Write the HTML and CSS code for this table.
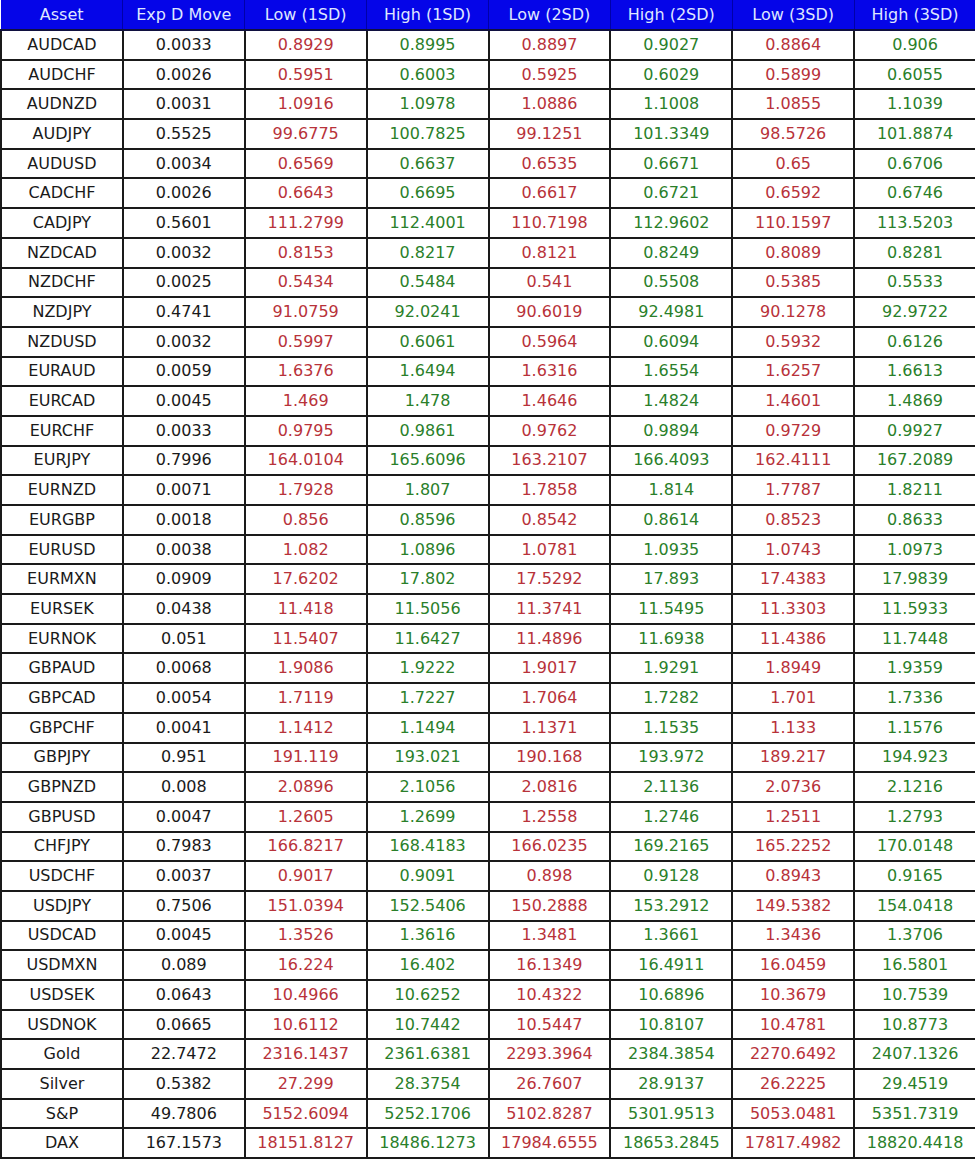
FILE: index.html
```html
<!DOCTYPE html>
<html>
<head>
<meta charset="utf-8">
<link rel="stylesheet" href="styles.css">
</head>
<body>
<table class="grid">
<thead>
<tr><th>Asset</th><th>Exp D Move</th><th>Low (1SD)</th><th>High (1SD)</th><th>Low (2SD)</th><th>High (2SD)</th><th>Low (3SD)</th><th>High (3SD)</th></tr>
</thead>
<tbody>
<tr><td>AUDCAD</td><td>0.0033</td><td class="lo">0.8929</td><td class="hi">0.8995</td><td class="lo">0.8897</td><td class="hi">0.9027</td><td class="lo">0.8864</td><td class="hi">0.906</td></tr>
<tr><td>AUDCHF</td><td>0.0026</td><td class="lo">0.5951</td><td class="hi">0.6003</td><td class="lo">0.5925</td><td class="hi">0.6029</td><td class="lo">0.5899</td><td class="hi">0.6055</td></tr>
<tr><td>AUDNZD</td><td>0.0031</td><td class="lo">1.0916</td><td class="hi">1.0978</td><td class="lo">1.0886</td><td class="hi">1.1008</td><td class="lo">1.0855</td><td class="hi">1.1039</td></tr>
<tr><td>AUDJPY</td><td>0.5525</td><td class="lo">99.6775</td><td class="hi">100.7825</td><td class="lo">99.1251</td><td class="hi">101.3349</td><td class="lo">98.5726</td><td class="hi">101.8874</td></tr>
<tr><td>AUDUSD</td><td>0.0034</td><td class="lo">0.6569</td><td class="hi">0.6637</td><td class="lo">0.6535</td><td class="hi">0.6671</td><td class="lo">0.65</td><td class="hi">0.6706</td></tr>
<tr><td>CADCHF</td><td>0.0026</td><td class="lo">0.6643</td><td class="hi">0.6695</td><td class="lo">0.6617</td><td class="hi">0.6721</td><td class="lo">0.6592</td><td class="hi">0.6746</td></tr>
<tr><td>CADJPY</td><td>0.5601</td><td class="lo">111.2799</td><td class="hi">112.4001</td><td class="lo">110.7198</td><td class="hi">112.9602</td><td class="lo">110.1597</td><td class="hi">113.5203</td></tr>
<tr><td>NZDCAD</td><td>0.0032</td><td class="lo">0.8153</td><td class="hi">0.8217</td><td class="lo">0.8121</td><td class="hi">0.8249</td><td class="lo">0.8089</td><td class="hi">0.8281</td></tr>
<tr><td>NZDCHF</td><td>0.0025</td><td class="lo">0.5434</td><td class="hi">0.5484</td><td class="lo">0.541</td><td class="hi">0.5508</td><td class="lo">0.5385</td><td class="hi">0.5533</td></tr>
<tr><td>NZDJPY</td><td>0.4741</td><td class="lo">91.0759</td><td class="hi">92.0241</td><td class="lo">90.6019</td><td class="hi">92.4981</td><td class="lo">90.1278</td><td class="hi">92.9722</td></tr>
<tr><td>NZDUSD</td><td>0.0032</td><td class="lo">0.5997</td><td class="hi">0.6061</td><td class="lo">0.5964</td><td class="hi">0.6094</td><td class="lo">0.5932</td><td class="hi">0.6126</td></tr>
<tr><td>EURAUD</td><td>0.0059</td><td class="lo">1.6376</td><td class="hi">1.6494</td><td class="lo">1.6316</td><td class="hi">1.6554</td><td class="lo">1.6257</td><td class="hi">1.6613</td></tr>
<tr><td>EURCAD</td><td>0.0045</td><td class="lo">1.469</td><td class="hi">1.478</td><td class="lo">1.4646</td><td class="hi">1.4824</td><td class="lo">1.4601</td><td class="hi">1.4869</td></tr>
<tr><td>EURCHF</td><td>0.0033</td><td class="lo">0.9795</td><td class="hi">0.9861</td><td class="lo">0.9762</td><td class="hi">0.9894</td><td class="lo">0.9729</td><td class="hi">0.9927</td></tr>
<tr><td>EURJPY</td><td>0.7996</td><td class="lo">164.0104</td><td class="hi">165.6096</td><td class="lo">163.2107</td><td class="hi">166.4093</td><td class="lo">162.4111</td><td class="hi">167.2089</td></tr>
<tr><td>EURNZD</td><td>0.0071</td><td class="lo">1.7928</td><td class="hi">1.807</td><td class="lo">1.7858</td><td class="hi">1.814</td><td class="lo">1.7787</td><td class="hi">1.8211</td></tr>
<tr><td>EURGBP</td><td>0.0018</td><td class="lo">0.856</td><td class="hi">0.8596</td><td class="lo">0.8542</td><td class="hi">0.8614</td><td class="lo">0.8523</td><td class="hi">0.8633</td></tr>
<tr><td>EURUSD</td><td>0.0038</td><td class="lo">1.082</td><td class="hi">1.0896</td><td class="lo">1.0781</td><td class="hi">1.0935</td><td class="lo">1.0743</td><td class="hi">1.0973</td></tr>
<tr><td>EURMXN</td><td>0.0909</td><td class="lo">17.6202</td><td class="hi">17.802</td><td class="lo">17.5292</td><td class="hi">17.893</td><td class="lo">17.4383</td><td class="hi">17.9839</td></tr>
<tr><td>EURSEK</td><td>0.0438</td><td class="lo">11.418</td><td class="hi">11.5056</td><td class="lo">11.3741</td><td class="hi">11.5495</td><td class="lo">11.3303</td><td class="hi">11.5933</td></tr>
<tr><td>EURNOK</td><td>0.051</td><td class="lo">11.5407</td><td class="hi">11.6427</td><td class="lo">11.4896</td><td class="hi">11.6938</td><td class="lo">11.4386</td><td class="hi">11.7448</td></tr>
<tr><td>GBPAUD</td><td>0.0068</td><td class="lo">1.9086</td><td class="hi">1.9222</td><td class="lo">1.9017</td><td class="hi">1.9291</td><td class="lo">1.8949</td><td class="hi">1.9359</td></tr>
<tr><td>GBPCAD</td><td>0.0054</td><td class="lo">1.7119</td><td class="hi">1.7227</td><td class="lo">1.7064</td><td class="hi">1.7282</td><td class="lo">1.701</td><td class="hi">1.7336</td></tr>
<tr><td>GBPCHF</td><td>0.0041</td><td class="lo">1.1412</td><td class="hi">1.1494</td><td class="lo">1.1371</td><td class="hi">1.1535</td><td class="lo">1.133</td><td class="hi">1.1576</td></tr>
<tr><td>GBPJPY</td><td>0.951</td><td class="lo">191.119</td><td class="hi">193.021</td><td class="lo">190.168</td><td class="hi">193.972</td><td class="lo">189.217</td><td class="hi">194.923</td></tr>
<tr><td>GBPNZD</td><td>0.008</td><td class="lo">2.0896</td><td class="hi">2.1056</td><td class="lo">2.0816</td><td class="hi">2.1136</td><td class="lo">2.0736</td><td class="hi">2.1216</td></tr>
<tr><td>GBPUSD</td><td>0.0047</td><td class="lo">1.2605</td><td class="hi">1.2699</td><td class="lo">1.2558</td><td class="hi">1.2746</td><td class="lo">1.2511</td><td class="hi">1.2793</td></tr>
<tr><td>CHFJPY</td><td>0.7983</td><td class="lo">166.8217</td><td class="hi">168.4183</td><td class="lo">166.0235</td><td class="hi">169.2165</td><td class="lo">165.2252</td><td class="hi">170.0148</td></tr>
<tr><td>USDCHF</td><td>0.0037</td><td class="lo">0.9017</td><td class="hi">0.9091</td><td class="lo">0.898</td><td class="hi">0.9128</td><td class="lo">0.8943</td><td class="hi">0.9165</td></tr>
<tr><td>USDJPY</td><td>0.7506</td><td class="lo">151.0394</td><td class="hi">152.5406</td><td class="lo">150.2888</td><td class="hi">153.2912</td><td class="lo">149.5382</td><td class="hi">154.0418</td></tr>
<tr><td>USDCAD</td><td>0.0045</td><td class="lo">1.3526</td><td class="hi">1.3616</td><td class="lo">1.3481</td><td class="hi">1.3661</td><td class="lo">1.3436</td><td class="hi">1.3706</td></tr>
<tr><td>USDMXN</td><td>0.089</td><td class="lo">16.224</td><td class="hi">16.402</td><td class="lo">16.1349</td><td class="hi">16.4911</td><td class="lo">16.0459</td><td class="hi">16.5801</td></tr>
<tr><td>USDSEK</td><td>0.0643</td><td class="lo">10.4966</td><td class="hi">10.6252</td><td class="lo">10.4322</td><td class="hi">10.6896</td><td class="lo">10.3679</td><td class="hi">10.7539</td></tr>
<tr><td>USDNOK</td><td>0.0665</td><td class="lo">10.6112</td><td class="hi">10.7442</td><td class="lo">10.5447</td><td class="hi">10.8107</td><td class="lo">10.4781</td><td class="hi">10.8773</td></tr>
<tr><td>Gold</td><td>22.7472</td><td class="lo">2316.1437</td><td class="hi">2361.6381</td><td class="lo">2293.3964</td><td class="hi">2384.3854</td><td class="lo">2270.6492</td><td class="hi">2407.1326</td></tr>
<tr><td>Silver</td><td>0.5382</td><td class="lo">27.299</td><td class="hi">28.3754</td><td class="lo">26.7607</td><td class="hi">28.9137</td><td class="lo">26.2225</td><td class="hi">29.4519</td></tr>
<tr><td>S&amp;P</td><td>49.7806</td><td class="lo">5152.6094</td><td class="hi">5252.1706</td><td class="lo">5102.8287</td><td class="hi">5301.9513</td><td class="lo">5053.0481</td><td class="hi">5351.7319</td></tr>
<tr><td>DAX</td><td>167.1573</td><td class="lo">18151.8127</td><td class="hi">18486.1273</td><td class="lo">17984.6555</td><td class="hi">18653.2845</td><td class="lo">17817.4982</td><td class="hi">18820.4418</td></tr>
</tbody>
</table>
</body>
</html>
```

FILE: styles.css
```css
html, body {
  margin: 0;
  padding: 0;
  background: #ffffff;
  overflow: hidden;
}

.grid {
  border-collapse: collapse;
  table-layout: fixed;
  width: 977px;
  font-family: "DejaVu Sans", "Liberation Sans", sans-serif;
  font-size: 16px;
  color: #1a1a1a;
}

.grid th {
  background: #0505e8;
  color: #dfe6ff;
  font-weight: normal;
  height: 29px;
  padding: 0;
  text-align: center;
  border-right: 1px solid #0000a8;
  border-bottom: 2px solid #101040;
}

.grid td {
  height: 27.7px;
  padding: 0;
  text-align: center;
  border: 2px solid #1a1a1a;
  line-height: 20px;
}

.grid .lo {
  color: #b8323a;
}

.grid .hi {
  color: #2a7f2a;
}
```
